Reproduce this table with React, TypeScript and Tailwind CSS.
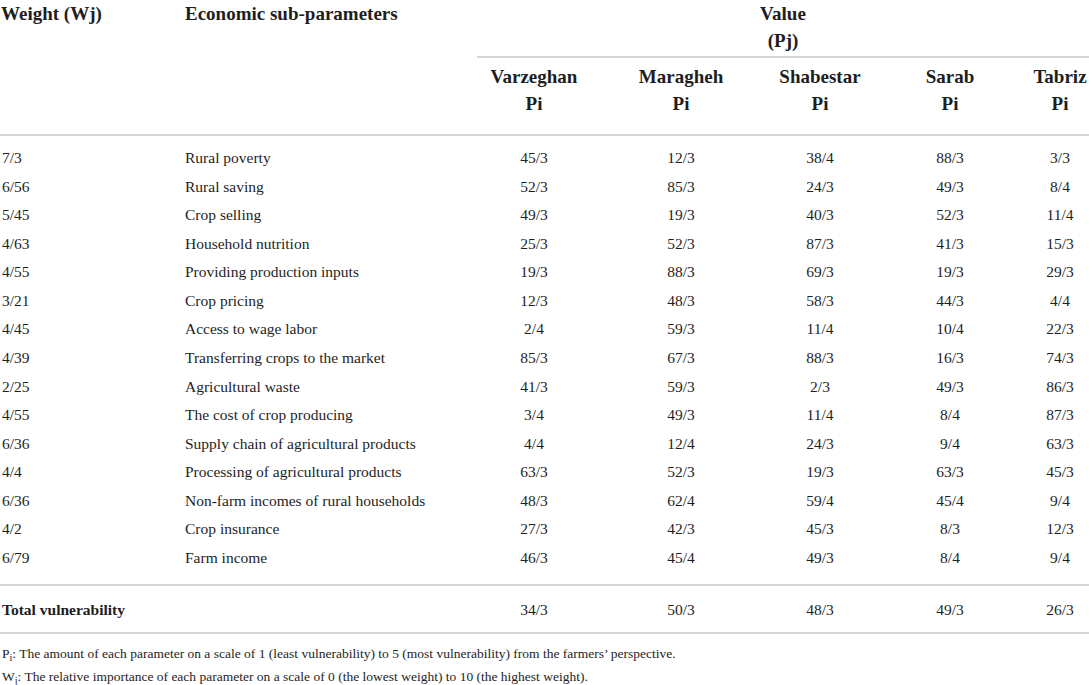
import React from "react";

const rows: string[][] = [
  ["7/3", "Rural poverty", "45/3", "12/3", "38/4", "88/3", "3/3"],
  ["6/56", "Rural saving", "52/3", "85/3", "24/3", "49/3", "8/4"],
  ["5/45", "Crop selling", "49/3", "19/3", "40/3", "52/3", "11/4"],
  ["4/63", "Household nutrition", "25/3", "52/3", "87/3", "41/3", "15/3"],
  ["4/55", "Providing production inputs", "19/3", "88/3", "69/3", "19/3", "29/3"],
  ["3/21", "Crop pricing", "12/3", "48/3", "58/3", "44/3", "4/4"],
  ["4/45", "Access to wage labor", "2/4", "59/3", "11/4", "10/4", "22/3"],
  ["4/39", "Transferring crops to the market", "85/3", "67/3", "88/3", "16/3", "74/3"],
  ["2/25", "Agricultural waste", "41/3", "59/3", "2/3", "49/3", "86/3"],
  ["4/55", "The cost of crop producing", "3/4", "49/3", "11/4", "8/4", "87/3"],
  ["6/36", "Supply chain of agricultural products", "4/4", "12/4", "24/3", "9/4", "63/3"],
  ["4/4", "Processing of agricultural products", "63/3", "52/3", "19/3", "63/3", "45/3"],
  ["6/36", "Non-farm incomes of rural households", "48/3", "62/4", "59/4", "45/4", "9/4"],
  ["4/2", "Crop insurance", "27/3", "42/3", "45/3", "8/3", "12/3"],
  ["6/79", "Farm income", "46/3", "45/4", "49/3", "8/4", "9/4"],
];

const cities = ["Varzeghan", "Maragheh", "Shabestar", "Sarab", "Tabriz"];
const totals = ["34/3", "50/3", "48/3", "49/3", "26/3"];

const gridCols = "grid grid-cols-[185px_292px_114px_180px_98px_162px_58px]";

export default function App() {
  return (
    <div className="w-[1089px] h-[685px] bg-white overflow-hidden text-[#1e1e1e] font-['Liberation_Serif',serif]">
      {/* Header */}
      <div className="flex h-[134px]">
        <div className="w-[185px] pl-[1px] text-[19px] font-bold leading-[27px]">Weight (Wj)</div>
        <div className="w-[292px] text-[19px] font-bold leading-[27px]">Economic sub-parameters</div>
        <div className="flex-1 flex flex-col">
          <div className="h-[56px] text-center text-[19px] font-bold leading-[27px]">
            Value
            <br />
            (Pj)
          </div>
          <div className="h-[2px] bg-[#d6d6d6]" />
          <div className="grid grid-cols-[114px_180px_98px_162px_58px] pt-[5px] text-center text-[19px] font-bold leading-[27px]">
            {cities.map((c) => (
              <div key={c} className="whitespace-nowrap">
                {c}
                <br />
                Pi
              </div>
            ))}
          </div>
        </div>
      </div>
      <div className="h-[2px] bg-[#d6d6d6]" />

      {/* Body */}
      <div className="pt-[8px] pb-[12px] text-[15.5px]">
        {rows.map((r, i) => (
          <div key={i} className={`${gridCols} h-[28.57px] leading-[28.57px]`}>
            <div className="pl-[2px]">{r[0]}</div>
            <div className="whitespace-nowrap">{r[1]}</div>
            {r.slice(2).map((v, j) => (
              <div key={j} className="text-center">
                {v}
              </div>
            ))}
          </div>
        ))}
      </div>
      <div className="h-[2px] bg-[#d6d6d6]" />

      {/* Total */}
      <div className={`${gridCols} h-[46px] items-center text-[15.5px]`}>
        <div className="col-span-2 pl-[2px] font-bold">Total vulnerability</div>
        {totals.map((v, j) => (
          <div key={j} className="text-center">
            {v}
          </div>
        ))}
      </div>
      <div className="h-[2px] bg-[#d6d6d6]" />

      {/* Footnotes */}
      <div className="pt-[8px] pl-[2px] text-[13.5px] leading-[23px]">
        <div>
          P<sub>i</sub>: The amount of each parameter on a scale of 1 (least vulnerability) to 5 (most vulnerability) from the farmers’ perspective.
        </div>
        <div>
          W<sub>j</sub>: The relative importance of each parameter on a scale of 0 (the lowest weight) to 10 (the highest weight).
        </div>
      </div>
    </div>
  );
}
